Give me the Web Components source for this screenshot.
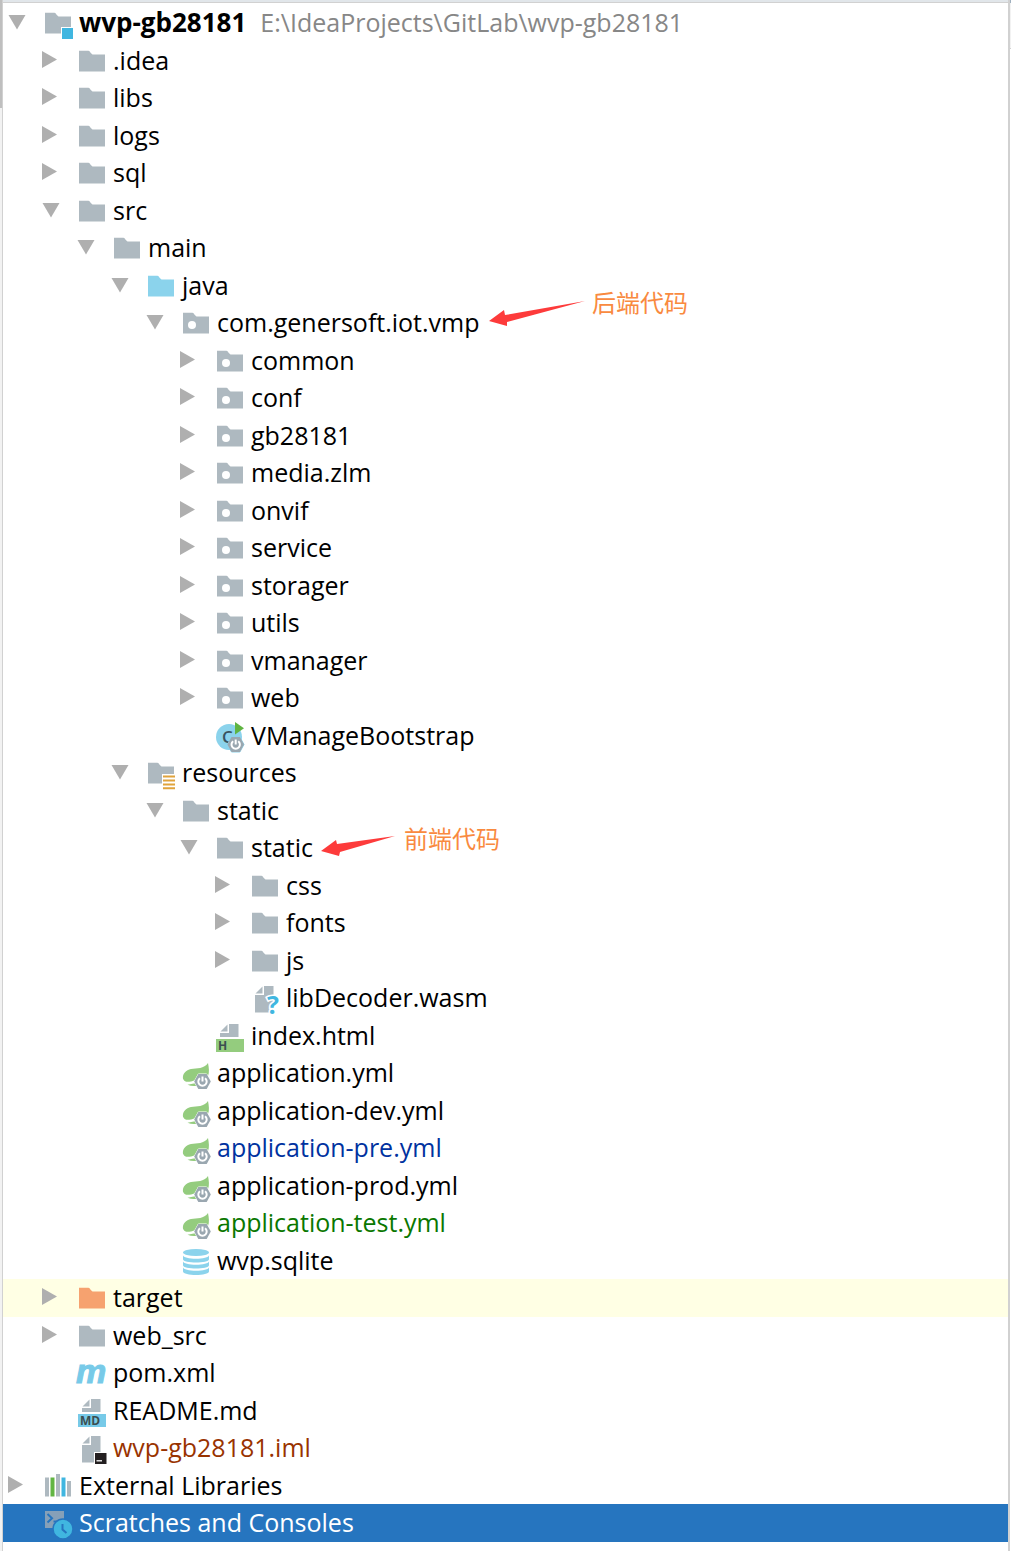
<!DOCTYPE html>
<html lang="zh-CN">
<head>
<meta charset="utf-8">
<title>wvp-gb28181</title>
<style>
  html, body {
    height: 100%;
    margin: 0;
    background: #FFF;
  }
</style>
</head>
<body>

<tool-window>
  <project-tree>
    <tree-row level="0" icon="module" state="open"><b>wvp-gb28181</b><span slot="hint">E:\IdeaProjects\GitLab\wvp-gb28181</span></tree-row>
    <tree-row level="1" icon="folder" state="closed">.idea</tree-row>
    <tree-row level="1" icon="folder" state="closed">libs</tree-row>
    <tree-row level="1" icon="folder" state="closed">logs</tree-row>
    <tree-row level="1" icon="folder" state="closed">sql</tree-row>
    <tree-row level="1" icon="folder" state="open">src</tree-row>
    <tree-row level="2" icon="folder" state="open">main</tree-row>
    <tree-row level="3" icon="source" state="open">java</tree-row>
    <tree-row level="4" icon="package" state="open">com.genersoft.iot.vmp</tree-row>
    <tree-row level="5" icon="package" state="closed">common</tree-row>
    <tree-row level="5" icon="package" state="closed">conf</tree-row>
    <tree-row level="5" icon="package" state="closed">gb28181</tree-row>
    <tree-row level="5" icon="package" state="closed">media.zlm</tree-row>
    <tree-row level="5" icon="package" state="closed">onvif</tree-row>
    <tree-row level="5" icon="package" state="closed">service</tree-row>
    <tree-row level="5" icon="package" state="closed">storager</tree-row>
    <tree-row level="5" icon="package" state="closed">utils</tree-row>
    <tree-row level="5" icon="package" state="closed">vmanager</tree-row>
    <tree-row level="5" icon="package" state="closed">web</tree-row>
    <tree-row level="5" icon="bootstrap">VManageBootstrap</tree-row>
    <tree-row level="3" icon="resources" state="open">resources</tree-row>
    <tree-row level="4" icon="folder" state="open">static</tree-row>
    <tree-row level="5" icon="folder" state="open">static</tree-row>
    <tree-row level="6" icon="folder" state="closed">css</tree-row>
    <tree-row level="6" icon="folder" state="closed">fonts</tree-row>
    <tree-row level="6" icon="folder" state="closed">js</tree-row>
    <tree-row level="6" icon="unknown">libDecoder.wasm</tree-row>
    <tree-row level="5" icon="html">index.html</tree-row>
    <tree-row level="4" icon="spring">application.yml</tree-row>
    <tree-row level="4" icon="spring">application-dev.yml</tree-row>
    <tree-row level="4" icon="spring" status="modified">application-pre.yml</tree-row>
    <tree-row level="4" icon="spring">application-prod.yml</tree-row>
    <tree-row level="4" icon="spring" status="added">application-test.yml</tree-row>
    <tree-row level="4" icon="database">wvp.sqlite</tree-row>
    <tree-row level="1" icon="excluded" state="closed" marked>target</tree-row>
    <tree-row level="1" icon="folder" state="closed">web_src</tree-row>
    <tree-row level="1" icon="maven">pom.xml</tree-row>
    <tree-row level="1" icon="markdown">README.md</tree-row>
    <tree-row level="1" icon="iml" status="unversioned">wvp-gb28181.iml</tree-row>
    <tree-row level="0" icon="libraries" state="closed">External Libraries</tree-row>
    <tree-row level="0" icon="scratches" selected>Scratches and Consoles</tree-row>
  </project-tree>
  <tree-note slot="note" x="489" y="288" reach="96" arrow="0,33 15,22 16,27 96,13 18,34 18,38">后端代码</tree-note>
  <tree-note slot="note" x="321" y="824" reach="76" arrow="0,27 15,16 16,20 74,12 19,28 18,32">前端代码</tree-note>
</tool-window>

<script>
  const GRAY = '#AEB9C0';

  /* shared shapes */
  const folder = color => `<path d="M1 5.700h9.500c1.500 0 2.500 3.800 5 3.800H27V26.500H1z" fill="${color}"/>`;
  const page = bottom => `<path d="M13 4h9.500v${bottom - 4}H4V13h9z" fill="${GRAY}"/><path d="M11.500 4.500v7H4.500z" fill="${GRAY}"/>`;
  const power = (x, y, bg) => `
    <path transform="translate(${x} ${y})" d="M-4.200-7.500h8.400L8.300 0 4.200 7.500h-8.400L-8.300 0z" fill="#9AA7B0" stroke="${bg}" stroke-width="1" paint-order="stroke"/>
    <path transform="translate(${x} ${y})" d="M-2.500-3.300a4.200 4.200 0 1 0 5 0M0-5v5" fill="none" stroke="#FFF" stroke-width="2"/>`;
  const band = (color, text) => `
    <rect y="19" width="28" height="13" fill="${color}"/>
    <text x="2" y="30" font-family="Open Sans, sans-serif" font-size="12" font-weight="700" fill="#3B4E50">${text}</text>`;

  const ICONS = {
    folder: folder(GRAY),
    source: folder('#8BD3EC'),
    excluded: folder('#F6A26F'),
    package: folder(GRAY) + '<circle cx="10" cy="18" r="4" fill="#FFF"/>',
    module: folder(GRAY) + '<path d="M17 20h12v12H17z" fill="#FFF"/><path d="M18 21h11v11H18z" fill="#40B6E0"/>',
    resources: folder(GRAY) + `<path d="M15 17h14v15H15z" fill="#FFF"/>
      <path d="M16 19.500h12M16 23.500h12M16 27.500h12M16 31.200h12" stroke="#E0A33C" stroke-width="2"/>`,
    bootstrap: `<circle cx="13" cy="17" r="13" fill="#8BD3EC"/>
      <text x="6" y="23" font-family="Open Sans, sans-serif" font-size="17" font-weight="600" fill="#38525F">C</text>
      <path d="M19 2l9 6.200-9 6.300z" fill="#5FB441"/>` + power(19.7, 24.5, '#8BD3EC'),
    unknown: page(30.5) + `<text x="16" y="32" font-family="Open Sans, sans-serif" font-size="25" font-weight="700"
      fill="#40B6E0" stroke="#FFF" stroke-width="3" paint-order="stroke">?</text>`,
    html: page(17) + band('#94CC7E', 'H'),
    markdown: page(17) + band('#77CAE8', 'MD'),
    iml: page(30.5) + `<path d="M16 20h13v12H16z" fill="#FFF"/><path d="M17 21h11.500v11H17z" fill="#231F20"/>
      <path d="M18.500 28.800h5.500" stroke="#FFF" stroke-width="1.300"/>`,
    spring: `<path d="M26 6c1 5 1.500 9.500 0 13-3 7-10 7-17 6.800-3.500.2-7-1-8-4-.8-5 3-8.800 8-9.800 6-1 13 0 17-6z" fill="#94CC7E"/>
      <path d="M3 24.500c4.500 1 12-1 16-5L21 28H8z" fill="#FFF"/>
      <path d="M5.500 27.800l7.500-1.600 1.500 2.600c-3 .4-6 .2-9-1z" fill="#94CC7E"/>` + power(20.5, 24.5, '#FFF'),
    database: `<path d="M1 10.300c0 4.600 26 4.600 26 0v4c0 4.400-26 4.400-26 0zM1 16.200c0 4.600 26 4.600 26 0v4c0 4.400-26 4.400-26 0zM1 22.300c0 4.600 26 4.600 26 0v4.200c0 4.600-26 4.600-26 0z" fill="#8BD3EC"/>
      <ellipse cx="14" cy="7.500" rx="13" ry="3.500" fill="#8BD3EC"/>`,
    maven: `<text x="-2" y="26" font-family="Liberation Sans, sans-serif" font-size="34" font-weight="700" font-style="italic"
      fill="#77CAE8" stroke="#77CAE8" stroke-width="1">m</text>`,
    libraries: `<path d="M1 7.500h4v19H1zM12 4h4v22.500h-4zM23 11h4v15.500h-4z" fill="${GRAY}"/>
      <path d="M6.500 7.500h4v19h-4z" fill="#62B543"/><path d="M17.500 7.500h4v19h-4z" fill="#40B6E0"/>`,
    scratches: `<path d="M1 4h19v17H1z" fill="#86A0B8"/>
      <path d="M3.500 7l4.500 4.200-4.500 4.200M9.500 14.500H15" fill="none" stroke="#2675BF" stroke-width="2"/>
      <circle cx="19" cy="22" r="10" fill="#40B6E0" stroke="#2675BF" stroke-width="1.500"/>
      <path d="M18.500 17v5.500l4 3.500" fill="none" stroke="#2675BF" stroke-width="2"/>`
  };

  class TreeRow extends HTMLElement {
    constructor() {
      super();
      this.attachShadow({mode: 'open'});
    }

    connectedCallback() {
      const state = this.getAttribute('state');

      this.shadowRoot.innerHTML = `
        <style>
          :host {
            display: flex;
            align-items: flex-start;
            padding: 3px 5px 0;
            white-space: nowrap;
            color: #000;
          }
          :host([hidden]) { display: none; }
          :host([marked]) { background: #FFFFE4; }
          :host([selected]) { background: #2675BF; color: #FFF; }
          :host([status=modified]) { color: #0032A0; }
          :host([status=added]) { color: #0A7700; }
          :host([status=unversioned]) { color: #993300; }

          i { flex: none; width: 34px; }
          i:nth-of-type(even) { width: 35px; }

          button, .blank {
            flex: none;
            width: 18px;
            height: 32px;
            margin: 0 18px 0 0;
            padding: 0;
            border: 0;
            background: none;
          }
          svg {
            display: block;
            flex: none;
            overflow: visible;
          }
          .label {
            margin-left: 5px;
            line-height: 30px;
          }
          ::slotted(b) { font-size: 26px; }
          ::slotted([slot=hint]) {
            margin-left: 14px;
            line-height: 30px;
            color: #878787;
          }
        </style>
        ${'<i></i>'.repeat(this.level)}
        ${state ? `<button type="button" aria-label="toggle">
          <svg width="18" height="32"><path fill="#AFAFAF"></path></svg></button>` : '<span class="blank"></span>'}
        <svg width="30" height="32" aria-hidden="true">${ICONS[this.getAttribute('icon')]}</svg>
        <span class="label"><slot></slot></span>
        <slot name="hint"></slot>
      `;

      this.setAttribute('role', 'treeitem');
      this.setAttribute('aria-level', this.level + 1);

      if (state) {
        this.button = this.shadowRoot.querySelector('button');
        this.button.addEventListener('click', () => this.toggle());
        this.drawArrow();
      }
    }

    get level() {
      return Number(this.getAttribute('level'));
    }

    drawArrow() {
      const open = this.getAttribute('state') === 'open';
      this.button.setAttribute('aria-expanded', open);
      this.button.querySelector('path').setAttribute('d', open ? 'M.5 8h17L9 22.500z' : 'M0 6v17l15-8.500z');
    }

    /* hide or show every row below that is deeper than this one */
    toggle() {
      const open = this.getAttribute('state') !== 'open';
      this.setAttribute('state', open ? 'open' : 'closed');
      this.drawArrow();

      let closedAt = open ? Infinity : this.level;
      for (let row = this.nextElementSibling; row && row.level > this.level; row = row.nextElementSibling) {
        if (open && row.level <= closedAt) closedAt = Infinity;
        row.hidden = row.level > closedAt;
        if (!row.hidden && row.getAttribute('state') === 'closed') closedAt = row.level;
      }
    }
  }

  class ProjectTree extends HTMLElement {
    constructor() {
      super();
      this.attachShadow({mode: 'open'}).innerHTML = `
        <style>
          :host {
            display: grid;
            grid-auto-rows: 38px 37px;
            font: 25px "Open Sans", "Noto Sans", sans-serif;
          }
        </style>
        <slot></slot>
      `;
    }

    connectedCallback() {
      this.setAttribute('role', 'tree');
    }
  }

  /* handwritten remark with an arrow, laid over the tree */
  class TreeNote extends HTMLElement {
    constructor() {
      super();
      this.attachShadow({mode: 'open'});
    }

    connectedCallback() {
      this.shadowRoot.innerHTML = `
        <style>
          :host {
            position: absolute;
            left: ${this.getAttribute('x')}px;
            top: ${this.getAttribute('y')}px;
            display: flex;
            gap: 7px;
            font: 24px/28px "Noto Sans CJK SC", sans-serif;
            color: #F98A3F;
            white-space: nowrap;
            pointer-events: none;
          }
          svg { flex: none; overflow: visible; }
        </style>
        <svg width="${this.getAttribute('reach')}" height="28" aria-hidden="true">
          <polygon points="${this.getAttribute('arrow')}" fill="#FD3B3B"/>
        </svg>
        <span><slot></slot></span>
      `;
    }
  }

  class ToolWindow extends HTMLElement {
    constructor() {
      super();
      this.attachShadow({mode: 'open'}).innerHTML = `
        <style>
          :host {
            position: relative;
            display: grid;
            grid-template-columns: 2px 1fr 1px;
            min-height: 100%;
            overflow: hidden;
          }
          .stripe { background: linear-gradient(#BFBFBF 108px, #F2F2F2 108px); }
          .pane {
            min-width: 0;
            border-left: 1px solid #D1D1D1;
            border-right: 2px solid #D1D1D1;
          }
          .header {
            height: 2px;
            margin-bottom: 1px;
            background: #E1E6EA;
            border-bottom: 1px solid #D1D1D1;
          }
          .edge { background: linear-gradient(#9FB0BF 3px, #F2F2F2 3px 48px, #D1D1D1 48px 49px, #FFF 49px); }
        </style>
        <div class="stripe"></div>
        <div class="pane">
          <div class="header"></div>
          <slot></slot>
        </div>
        <div class="edge"></div>
        <slot name="note"></slot>
      `;
    }
  }

  customElements.define('tree-row', TreeRow);
  customElements.define('project-tree', ProjectTree);
  customElements.define('tree-note', TreeNote);
  customElements.define('tool-window', ToolWindow);
</script>
</body>
</html>
